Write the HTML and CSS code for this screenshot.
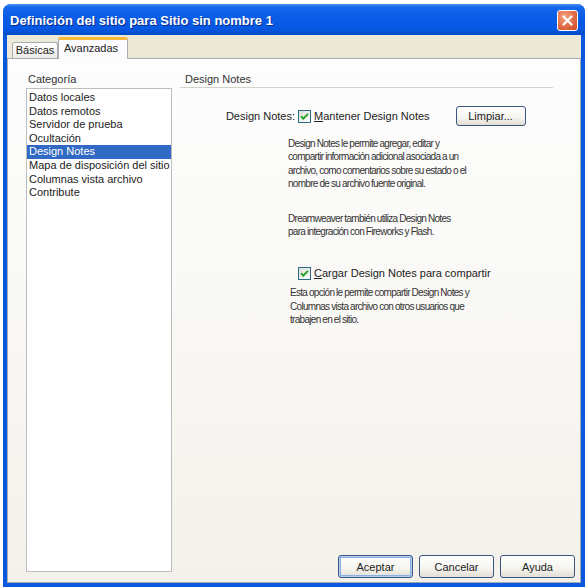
FILE: index.html
```html
<!DOCTYPE html>
<html lang="es">
<head>
<meta charset="utf-8">
<title>Definición del sitio</title>
<link rel="stylesheet" href="styles.css">
</head>
<body>
<div class="window">
  <div class="titlebar">
    <span class="title">Definición del sitio para Sitio sin nombre 1</span>
    <div class="close">
      <svg width="13" height="13" viewBox="0 0 13 13"><path d="M2.5 2.5 L10.5 10.5 M10.5 2.5 L2.5 10.5" stroke="#fff" stroke-width="2.2" stroke-linecap="round"/></svg>
    </div>
  </div>
  <div class="frame">
    <div class="tabs">
      <div class="tab">Básicas</div>
      <div class="tab active">Avanzadas</div>
    </div>
    <div class="panel">
      <div class="sidebar">
        <div class="cat-label">Categoría</div>
        <ul class="list">
          <li>Datos locales</li>
          <li>Datos remotos</li>
          <li>Servidor de prueba</li>
          <li>Ocultación</li>
          <li class="sel">Design Notes</li>
          <li>Mapa de disposición del sitio</li>
          <li>Columnas vista archivo</li>
          <li>Contribute</li>
        </ul>
      </div>
      <div class="content">
        <div class="header">Design Notes</div>
        <div class="row1">
          <span class="lbl">Design Notes:</span>
          <span class="check"><svg width="13" height="13" viewBox="0 0 13 13"><path d="M3 6.2 L5.3 8.6 L10 3.8" fill="none" stroke="#21A121" stroke-width="1.8"/></svg></span>
          <span class="ctext"><u>M</u>antener Design Notes</span>
          <button class="btn btn-limpiar">Limpiar...</button>
        </div>
        <p class="para p1">Design Notes le permite agregar, editar y<br>compartir información adicional asociada a un<br>archivo, como comentarios sobre su estado o el<br>nombre de su archivo fuente original.</p>
        <p class="para p2">Dreamweaver también utiliza Design Notes<br>para integración con Fireworks y Flash.</p>
        <div class="row2">
          <span class="check"><svg width="13" height="13" viewBox="0 0 13 13"><path d="M3 6.2 L5.3 8.6 L10 3.8" fill="none" stroke="#21A121" stroke-width="1.8"/></svg></span>
          <span class="ctext"><u>C</u>argar Design Notes para compartir</span>
        </div>
        <p class="para p3">Esta opción le permite compartir Design Notes y<br>Columnas vista archivo con otros usuarios que<br>trabajen en el sitio.</p>
        <div class="footer">
          <button class="btn default">Aceptar</button>
          <button class="btn">Cancelar</button>
          <button class="btn">Ayuda</button>
        </div>
      </div>
    </div>
  </div>
</div>
</body>
</html>
```
FILE: styles.css
```css
html, body {
  margin: 0;
  padding: 0;
  background: #ffffff;
}
body {
  width: 585px;
  height: 587px;
  overflow: hidden;
  font-family: "Liberation Sans", Arial, sans-serif;
  font-size: 11px;
  color: #222;
}
.window {
  margin: 4px 0 0 3px;
  width: 582px;
  height: 583px;
  box-sizing: border-box;
  display: flex;
  flex-direction: column;
  background: #0A58DE;
  border-radius: 8px 8px 0 0;
  padding: 0 4px 4px 4px;
}
.titlebar {
  height: 31px;
  flex: none;
  margin: 0 -4px;
  padding: 2px 7px 0 7px;
  box-sizing: border-box;
  display: flex;
  align-items: center;
  justify-content: space-between;
  border-radius: 8px 8px 0 0;
  background: linear-gradient(#4A94F8 0, #1668EC 3px, #0A5DE6 40%, #0658E2 80%, #044CC8 100%);
}
.title {
  color: #fff;
  font-weight: bold;
  font-size: 13px;
  text-shadow: 1px 1px 0 #0A2A8E;
}
.close {
  width: 21px;
  height: 21px;
  box-sizing: border-box;
  border: 1px solid #fff;
  border-radius: 3px;
  background: radial-gradient(circle at 35% 30%, #F3A583 0, #E47550 45%, #CB4A22 100%);
  display: flex;
  align-items: center;
  justify-content: center;
}
.frame {
  flex: 1;
  background: #ECE9D8;
  display: flex;
  flex-direction: column;
}
.tabs {
  height: 23px;
  flex: none;
  display: flex;
  align-items: flex-end;
  padding-left: 5px;
}
.tab {
  width: 46px;
  height: 16px;
  box-sizing: border-box;
  border: 1px solid #A5ACB2;
  border-bottom: none;
  border-radius: 3px 3px 0 0;
  background: linear-gradient(#FFFFFF, #ECEBE5);
  text-align: center;
  line-height: 15px;
  color: #222;
}
.tab.active {
  width: 70px;
  height: 22px;
  margin-bottom: -1px;
  position: relative;
  z-index: 1;
  border-top: 3px solid #F9B93A;
  background: #FCFCFE;
  line-height: 16px;
  padding-right: 4px;
}
.panel {
  flex: 1;
  display: flex;
  border: 1px solid #A5ACB2;
  background: linear-gradient(#FDFDFD 0, #F9F8F5 50%, #F3F1EA 100%);
}
.sidebar {
  width: 146px;
  flex: none;
  margin-left: 18px;
  padding: 14px 0 10px 0;
  display: flex;
  flex-direction: column;
}
.cat-label {
  line-height: 13px;
  padding-left: 2px;
  margin-bottom: 2px;
  color: #333;
}
.list {
  flex: 1;
  list-style: none;
  margin: 0;
  padding: 2px 0 0 0;
  background: #fff;
  border: 1px solid #BDBDBD;
}
.list li {
  line-height: 13.6px;
  padding-left: 2px;
}
.list li.sel {
  background: #316AC5;
  color: #fff;
}
.content {
  flex: 1;
  margin-left: 8px;
  padding: 14px 5px 4px 0;
  display: flex;
  flex-direction: column;
}
.header {
  line-height: 13px;
  padding: 0 0 1px 5px;
  margin-right: 22px;
  border-bottom: 1px solid #D4D3C8;
  color: #333;
}
.row1 {
  display: flex;
  align-items: center;
  height: 20px;
  margin-top: 18px;
}
.lbl {
  width: 115px;
  text-align: right;
}
.check {
  width: 13px;
  height: 13px;
  box-sizing: border-box;
  border: 1px solid #2A6A84;
  background: linear-gradient(135deg, #DCDCD7, #FFFFFF);
  display: flex;
  margin-left: 3px;
}
.check svg {
  margin: -1px;
}
.ctext {
  margin-left: 3px;
}
.btn {
  font-family: "Liberation Sans", Arial, sans-serif;
  font-size: 11px;
  color: #222;
  height: 23px;
  width: 75px;
  padding: 0;
  box-sizing: border-box;
  border: 1px solid #3A5580;
  border-radius: 3px;
  background: linear-gradient(#FFFFFF 0, #F5F4EF 60%, #E2DED3 100%);
}
.btn-limpiar {
  width: 70px;
  height: 20px;
  margin-left: 26px;
}
.btn.default {
  box-shadow: inset 0 0 0 1px #B7CDF2, inset 0 0 0 2px #89ADE4;
}
.para {
  margin: 0;
  font-family: "Liberation Sans", Arial, sans-serif;
  font-size: 10px;
  letter-spacing: -0.7px;
  word-spacing: -0.3px;
  line-height: 13.4px;
  color: #333;
}
.p1 {
  margin: 11px 0 0 108px;
}
.p2 {
  margin: 21px 0 0 108px;
}
.row2 {
  display: flex;
  align-items: center;
  height: 14px;
  margin: 28px 0 0 115px;
}
.p3 {
  margin: 6px 0 0 110px;
}
.footer {
  margin-top: auto;
  display: flex;
  justify-content: flex-end;
  gap: 6px;
}
```
